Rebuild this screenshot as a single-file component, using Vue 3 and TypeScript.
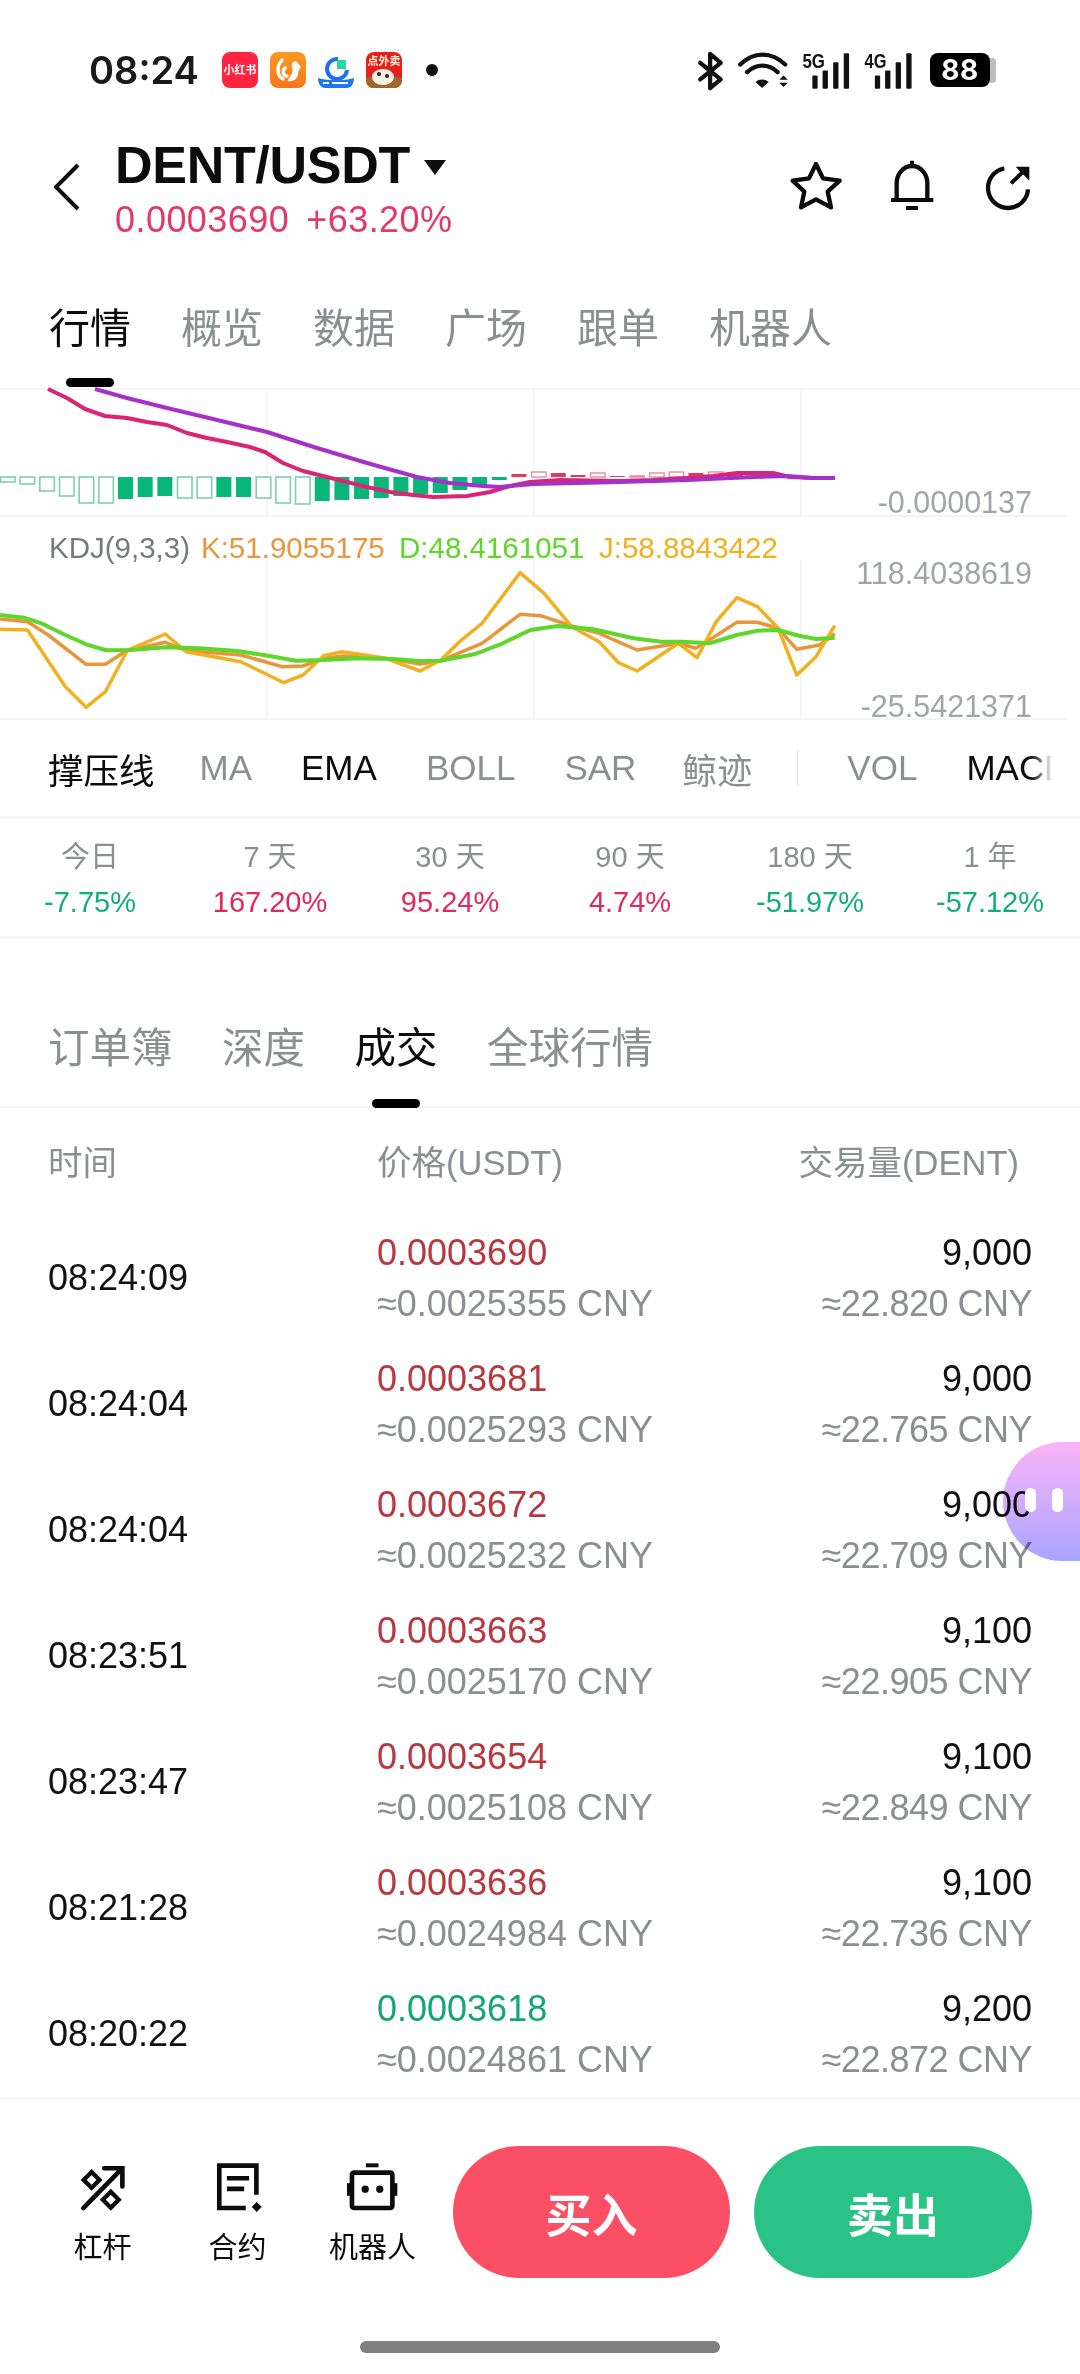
<script setup lang="ts">
interface Trade {
  time: string;
  price: string;
  up: boolean;
  cny: string;
  amount: string;
  amountCny: string;
}

const tabs = ["行情", "概览", "数据", "广场", "跟单", "机器人"];
const bookTabs = ["订单簿", "深度", "成交", "全球行情"];
const indicators = [
  { label: "MA", on: false },
  { label: "EMA", on: true },
  { label: "BOLL", on: false },
  { label: "SAR", on: false },
  { label: "鲸迹", on: false },
];
const periods = [
  { label: "今日", value: "-7.75%", up: false },
  { label: "7 天", value: "167.20%", up: true },
  { label: "30 天", value: "95.24%", up: true },
  { label: "90 天", value: "4.74%", up: true },
  { label: "180 天", value: "-51.97%", up: false },
  { label: "1 年", value: "-57.12%", up: false },
];
const trades: Trade[] = [
  { time: "08:24:09", price: "0.0003690", up: true, cny: "≈0.0025355 CNY", amount: "9,000", amountCny: "≈22.820 CNY" },
  { time: "08:24:04", price: "0.0003681", up: true, cny: "≈0.0025293 CNY", amount: "9,000", amountCny: "≈22.765 CNY" },
  { time: "08:24:04", price: "0.0003672", up: true, cny: "≈0.0025232 CNY", amount: "9,000", amountCny: "≈22.709 CNY" },
  { time: "08:23:51", price: "0.0003663", up: true, cny: "≈0.0025170 CNY", amount: "9,100", amountCny: "≈22.905 CNY" },
  { time: "08:23:47", price: "0.0003654", up: true, cny: "≈0.0025108 CNY", amount: "9,100", amountCny: "≈22.849 CNY" },
  { time: "08:21:28", price: "0.0003636", up: true, cny: "≈0.0024984 CNY", amount: "9,100", amountCny: "≈22.736 CNY" },
  { time: "08:20:22", price: "0.0003618", up: false, cny: "≈0.0024861 CNY", amount: "9,200", amountCny: "≈22.872 CNY" },
];

// histogram: height in px, hollow or not; negative bars hang below the zero line
const histDown: [number, boolean][] = [
  [5, true], [7, true], [14, true], [19, true], [26, true], [26, true], [22, false], [20, false], [19, false],
  [21, true], [21, true], [20, false], [20, false], [21, true], [26, true], [27, true], [24, false], [23, false],
  [22, false], [21, false], [19, false], [17, false], [16, false], [13, false], [9, false], [3, false],
];
const histUp: [number, boolean][] = [
  [3, false], [5, true], [4, false], [2, false], [4, true], [1, false], [1, true], [4, true], [5, true],
  [4, false], [5, true], [5, false], [3, true], [2, true],
];
const zeroY = 477;
const barStep = 19.67;
const downBars = histDown.map(([h, hollow], i) => ({ x: i * barStep + 0.5, y: zeroY, h, hollow }));
const upBars = histUp.map(([h, hollow], i) => ({ x: (i + histDown.length) * barStep + 0.5, y: zeroY - h, h, hollow }));

const pts = (list: number[][]) => list.map((p) => p.join(",")).join(" ");
// KDJ values were read off a crop that is 1.452x wide and 3x tall
const kdj = (list: number[][]) => pts(list.map(([x, y]) => [+(x / 1.452).toFixed(1), +(y / 3 + 380).toFixed(1)]));

const dif = pts([
  [48, 389], [67, 398], [85, 409], [105, 416], [127, 418], [147, 422], [167, 425], [187, 433], [207, 438], [227, 442],
  [250, 447], [265, 452], [283, 463], [303, 471], [323, 476], [343, 481], [367, 487], [390, 492], [413, 495], [433, 497],
  [467, 496], [490, 492], [500, 489], [510, 486], [530, 482], [560, 480], [620, 481], [653, 480], [687, 478], [713, 476],
  [737, 473], [773, 473], [790, 477], [813, 478], [835, 478],
]);
const dea = pts([
  [95, 389], [127, 398], [167, 408], [213, 419], [267, 432], [317, 448], [367, 463], [417, 477], [450, 483], [483, 486],
  [500, 487], [510, 486], [533, 484], [620, 482], [687, 480], [753, 477], [787, 476], [813, 478], [835, 478],
]);
const lineD = kdj([
  [0, 705], [35, 713], [60, 730], [95, 765], [125, 793], [153, 810], [185, 811], [240, 802], [290, 805], [345, 813],
  [385, 826], [430, 842], [470, 840], [520, 835], [570, 837], [610, 843], [640, 842], [690, 822], [730, 790], [770, 750],
  [810, 738], [860, 747], [920, 775], [960, 785], [990, 785], [1030, 790], [1070, 765], [1100, 752], [1130, 750],
  [1160, 767], [1185, 777], [1212, 773],
]);
const lineK = kdj([
  [0, 717], [40, 725], [70, 765], [125, 853], [153, 853], [185, 811], [240, 787], [270, 812], [350, 825], [410, 860],
  [440, 858], [470, 835], [500, 828], [560, 835], [610, 852], [640, 842], [700, 790], [755, 703], [785, 707], [830, 738],
  [870, 760], [925, 810], [985, 790], [1010, 805], [1030, 780], [1070, 727], [1100, 727], [1130, 745], [1157, 808],
  [1190, 795], [1212, 762],
]);
const lineJ = kdj([
  [0, 748], [40, 750], [95, 920], [125, 982], [153, 935], [185, 811], [240, 762], [270, 815], [350, 845], [412, 908],
  [440, 885], [470, 827], [497, 815], [560, 835], [610, 873], [640, 840], [670, 780], [700, 730], [755, 578], [790, 640],
  [830, 740], [870, 785], [898, 848], [925, 873], [985, 790], [1012, 833], [1040, 725], [1070, 653], [1100, 680],
  [1130, 745], [1157, 885], [1185, 830], [1212, 737],
]);
const signalBars = [
  { x: 0, y: 80, h: 40 }, { x: 31, y: 65, h: 55 }, { x: 63, y: 40, h: 80 }, { x: 95, y: 13, h: 107 },
];
</script>

<template>
  <div class="phone">
    <div class="status">
      <span class="status__time">08:24</span>
      <div class="status__apps">
        <svg class="app" viewBox="0 0 36 36">
          <rect width="36" height="36" rx="8" fill="#ff2442" />
          <text x="18" y="22" text-anchor="middle" class="app__txt" font-size="11" fill="#fff">小红书</text>
        </svg>
        <svg class="app" viewBox="0 0 36 36">
          <defs>
            <linearGradient id="orange" x1="0" y1="0" x2="0" y2="1">
              <stop offset="0" stop-color="#fb9a22" />
              <stop offset="1" stop-color="#f6761c" />
            </linearGradient>
          </defs>
          <rect width="36" height="36" rx="8" fill="url(#orange)" />
          <path d="M12 8C6 15 7 24 13 27M15 16c-3 3-2 8 2 8" fill="none" stroke="#fff" stroke-width="3.4" stroke-linecap="round" />
          <path d="M17 29c7 1 12-3 11-9l3-5-5-6c-3 0-5 3-4 6 2 4-1 9-5 14z" fill="#fff" />
        </svg>
        <svg class="app" viewBox="0 0 36 36">
          <path d="M20 7a10 10 0 1 0 9 11" fill="none" stroke="#1f6ff0" stroke-width="4" />
          <rect x="19" y="8" width="9" height="9" fill="#2ad6a0" />
          <path d="M0 26c10 3 26 3 36 0 0 6-3 10-7 10H7c-4 0-7-4-7-10z" fill="#1d78ee" />
          <path d="M5 31h6M14 31h16" stroke="#fff" stroke-width="2" />
        </svg>
        <svg class="app" viewBox="0 0 36 36">
          <rect width="36" height="36" rx="8" fill="#e51f1f" />
          <path d="M0 26c8-3 26-3 36 0v2c0 5-3 8-8 8H8c-5 0-8-3-8-8z" fill="#a0682e" />
          <ellipse cx="17" cy="25" rx="11" ry="8" fill="#f6efe6" />
          <circle cx="13" cy="22" r="2" fill="#3a2418" />
          <circle cx="21" cy="24" r="2" fill="#3a2418" />
          <text x="18" y="13" text-anchor="middle" class="app__txt" font-size="11" fill="#fff3d0">点外卖</text>
        </svg>
      </div>
      <span class="status__dot"></span>
      <svg class="status__icons" viewBox="75 50 705 130">
        <path d="M88 92 150 142 118 168V65l32 27-62 50" fill="none" stroke="#111" stroke-width="13" stroke-linejoin="round" stroke-linecap="round" />
        <path d="M209 97c40-40 95-40 136 0M230 120c28-26 64-26 92 0" fill="none" stroke="#111" stroke-width="13" stroke-linecap="round" />
        <path d="M255 150c11-10 29-10 40 0l-20 18z" fill="#111" />
        <path d="M327 143h26l-13-13zM327 152h26l-13 13z" fill="#111" />
        <text x="397" y="108" class="status__net" font-size="62" textLength="68" lengthAdjust="spacingAndGlyphs">5G</text>
        <text x="585" y="108" class="status__net" font-size="62" textLength="66" lengthAdjust="spacingAndGlyphs">4G</text>
        <g transform="translate(427 50)">
          <rect v-for="b in signalBars" :key="b.x" :x="b.x" :y="b.y" width="16" :height="b.h" rx="3" fill="#111" />
        </g>
        <g transform="translate(616 50)">
          <rect v-for="b in signalBars" :key="b.x" :x="b.x" :y="b.y" width="16" :height="b.h" rx="3" fill="#111" />
        </g>
      </svg>
      <div class="status__battery"><span>88</span></div>
      <span class="status__nub"></span>
    </div>

    <header class="head">
      <svg class="head__back" viewBox="0 0 26 48">
        <path d="M24 2 2 24l22 22" fill="none" stroke="#111" stroke-width="4" />
      </svg>
      <div class="head__pair">
        <div class="head__title">DENT/USDT<i class="head__caret"></i></div>
        <div class="head__price"><span>0.0003690</span><span>+63.20%</span></div>
      </div>
      <div class="head__actions">
        <svg viewBox="17 15 180 180" class="head__icon">
          <path d="M107 42l21 43 50 7-36 33 10 47-45-24-45 24 10-47-35-33 49-7z" fill="none" stroke="#0c0c0c" stroke-width="13" stroke-linejoin="round" />
        </svg>
        <svg viewBox="306 15 180 180" class="head__icon">
          <path d="M350 150v-50a46 52 0 0 1 92 0v50" fill="none" stroke="#0c0c0c" stroke-width="13" />
          <path d="M333 150h127M396 32v18" fill="none" stroke="#0c0c0c" stroke-width="12" />
          <rect x="378" y="168" width="36" height="12" fill="#0c0c0c" />
        </svg>
        <svg viewBox="593 15 180 180" class="head__icon">
          <path d="M672 55a60 60 0 1 0 71 63" fill="none" stroke="#0c0c0c" stroke-width="13" />
          <path d="M692 100l40-38" fill="none" stroke="#0c0c0c" stroke-width="12" />
          <path d="M706 50h41v42l-13-13-16-16z" fill="#0c0c0c" />
        </svg>
      </div>
    </header>

    <nav class="tabs tabs--main">
      <span v-for="(t, i) in tabs" :key="t" class="tabs__item" :class="{ 'tabs__item--on': i === 0 }">{{ t }}</span>
    </nav>

    <svg class="chart" viewBox="0 388 1080 332">
      <path d="M0 389H1080M0 516H1067M0 719H1067M267 389V516M534 389V516M801 389V516M267 560V719M534 560V719M801 560V719" fill="none" stroke="#f3f4f5" stroke-width="2" />
      <template v-for="(b, i) in downBars" :key="'d' + i">
        <rect v-if="b.hollow" :x="b.x" :y="b.y" width="14.5" :height="b.h" fill="#fff" stroke="#7ccfb4" stroke-width="1.6" />
        <rect v-else :x="b.x - 0.5" :y="b.y" width="15" :height="b.h" fill="#08b679" />
      </template>
      <template v-for="(b, i) in upBars" :key="'u' + i">
        <rect v-if="b.hollow" :x="b.x" :y="b.y" width="14.5" :height="b.h" fill="#fff" stroke="#e88a9e" stroke-width="1.4" />
        <rect v-else :x="b.x - 0.5" :y="b.y" width="15" :height="b.h" fill="#dc3d5c" />
      </template>
      <polyline :points="dif" fill="none" stroke="#dc2474" stroke-width="4" stroke-linejoin="round" />
      <polyline :points="dea" fill="none" stroke="#a431c8" stroke-width="4" stroke-linejoin="round" />
      <text x="1032" y="513" text-anchor="end" class="chart__axis">-0.0000137</text>
      <text x="49" y="558" class="chart__legend" fill="#777a7d">KDJ(9,3,3)</text>
      <text x="201" y="558" class="chart__legend" fill="#e8963c">K:51.9055175</text>
      <text x="399" y="558" class="chart__legend" fill="#5ed62c">D:48.4161051</text>
      <text x="599" y="558" class="chart__legend" fill="#f0b020">J:58.8843422</text>
      <text x="1032" y="584" text-anchor="end" class="chart__axis">118.4038619</text>
      <text x="1032" y="717" text-anchor="end" class="chart__axis">-25.5421371</text>
      <polyline :points="lineK" fill="none" stroke="#e8963c" stroke-width="3.5" stroke-linejoin="round" />
      <polyline :points="lineJ" fill="none" stroke="#f0b020" stroke-width="3.5" stroke-linejoin="round" />
      <polyline :points="lineD" fill="none" stroke="#5ed62c" stroke-width="4" stroke-linejoin="round" />
    </svg>

    <div class="ind">
      <span class="ind__sr">撑压线</span>
      <span v-for="m in indicators" :key="m.label" class="ind__item" :class="{ 'ind__item--on': m.on }">{{ m.label }}</span>
      <i class="ind__sep"></i>
      <span class="ind__item">VOL</span>
      <span class="ind__item ind__item--on">MACD</span>
      <i class="ind__fade"></i>
    </div>

    <div class="periods">
      <div v-for="p in periods" :key="p.label" class="periods__col">
        <span class="periods__label">{{ p.label }}</span>
        <span :class="p.up ? 'periods__up' : 'periods__down'">{{ p.value }}</span>
      </div>
    </div>

    <nav class="tabs tabs--book">
      <span v-for="(t, i) in bookTabs" :key="t" class="tabs__item" :class="{ 'tabs__item--on': i === 2 }">{{ t }}</span>
    </nav>

    <div class="thead">
      <span>时间</span>
      <span>价格(USDT)</span>
      <span class="thead__amount">交易量(DENT)</span>
    </div>

    <div class="trades">
      <div v-for="(t, i) in trades" :key="i" class="trade">
        <span class="trade__time">{{ t.time }}</span>
        <div class="trade__col">
          <span :class="t.up ? 'trade__red' : 'trade__green'">{{ t.price }}</span>
          <span class="trade__grey">{{ t.cny }}</span>
        </div>
        <div class="trade__col trade__col--right">
          <span class="trade__time">{{ t.amount }}</span>
          <span class="trade__grey trade__grey--tight">{{ t.amountCny }}</span>
        </div>
      </div>
    </div>

    <div class="bottom">
      <div class="bottom__tool">
        <svg viewBox="45 30 160 160" class="bottom__icon">
          <path d="M67 175 180 60M130 55h55v55" fill="none" stroke="#0c0c0c" stroke-width="14" stroke-linecap="round" />
          <path d="M92 66l24 24-24 24-24-24zM150 126l24 24-24 24-24-24z" fill="none" stroke="#0c0c0c" stroke-width="13" />
        </svg>
        <span>杠杆</span>
      </div>
      <div class="bottom__tool">
        <svg viewBox="450 30 160 160" class="bottom__icon">
          <path d="M555 175h-80V47h112v88" fill="none" stroke="#0c0c0c" stroke-width="14" />
          <path d="M498 85h67M498 117h52" fill="none" stroke="#0c0c0c" stroke-width="14" />
          <path d="M588 157l15 15-15 15-15-15z" fill="#0c0c0c" />
        </svg>
        <span>合约</span>
      </div>
      <div class="bottom__tool">
        <svg viewBox="860 30 160 160" class="bottom__icon">
          <rect x="878" y="68" width="122" height="107" rx="6" fill="none" stroke="#0c0c0c" stroke-width="14" />
          <rect x="920" y="40" width="38" height="12" fill="#0c0c0c" />
          <rect x="863" y="100" width="11" height="38" fill="#0c0c0c" />
          <rect x="1004" y="100" width="11" height="38" fill="#0c0c0c" />
          <circle cx="918" cy="118" r="11" fill="#0c0c0c" />
          <circle cx="962" cy="118" r="11" fill="#0c0c0c" />
        </svg>
        <span>机器人</span>
      </div>
      <button class="bottom__btn bottom__btn--buy">买入</button>
      <button class="bottom__btn bottom__btn--sell">卖出</button>
    </div>

    <div class="homebar"></div>

    <div class="bubble"><i></i><i></i></div>
  </div>
</template>

<style scoped>
.phone {
  position: relative;
  width: 1080px;
  height: 2374px;
  overflow: hidden;
  background: #fff;
  color: #0c0c0c;
  font-family: "Liberation Sans", "Noto Sans CJK SC", sans-serif;
}

.status {
  display: flex;
  align-items: center;
  height: 80px;
  padding: 30px 0 0 89px;
}
.status__time {
  width: 133px;
  font-family: Inter, sans-serif;
  font-size: 38px;
  font-weight: 600;
  color: #1a1a1a;
}
.status__apps {
  display: flex;
  gap: 12px;
}
.app {
  width: 36px;
  height: 36px;
  display: block;
}
.app__txt {
  font-family: "Noto Sans CJK SC", sans-serif;
  font-weight: 700;
}
.status__dot {
  width: 12px;
  height: 12px;
  margin-left: 24px;
  border-radius: 50%;
  background: #111;
}
.status__icons {
  width: 235px;
  height: 43px;
  margin-left: 257px;
}
.status__net {
  font-family: "Liberation Sans", sans-serif;
  font-weight: 700;
  fill: #111;
}
.status__battery {
  display: flex;
  align-items: center;
  justify-content: center;
  width: 60px;
  height: 34px;
  border-radius: 8px;
  background: #000;
  color: #fff;
  font-family: Inter, sans-serif;
  font-size: 28px;
  font-weight: 700;
  letter-spacing: 0.5px;
}
.status__nub {
  width: 6px;
  height: 25px;
  border-radius: 0 4px 4px 0;
  background: #bdbdbd;
}

.head {
  display: flex;
  align-items: flex-start;
  height: 160px;
  padding-left: 54px;
}
.head__back {
  width: 26px;
  height: 48px;
  margin-top: 53px;
}
.head__pair {
  margin: 25px 0 0 35px;
}
.head__title {
  display: flex;
  align-items: flex-start;
  height: 60px;
  font-size: 52px;
  line-height: 60px;
  font-weight: 700;
  letter-spacing: -0.3px;
}
.head__caret {
  width: 0;
  height: 0;
  margin: 25px 0 0 14px;
  border-left: 11px solid transparent;
  border-right: 11px solid transparent;
  border-top: 15px solid #0c0c0c;
}
.head__price {
  display: flex;
  gap: 17px;
  margin-top: 5px;
  font-size: 36px;
  line-height: 40px;
  letter-spacing: 0.45px;
  color: #e23a68;
}
.head__actions {
  display: flex;
  gap: 36px;
  margin: 45px 0 0 auto;
  padding-right: 42px;
}
.head__icon {
  width: 60px;
  height: 60px;
}

.tabs {
  display: flex;
  gap: 50px;
  padding-left: 49px;
  font-size: 41px;
  line-height: 48px;
  color: #8c8f92;
}
.tabs--main {
  height: 118px;
  padding-top: 35px;
  box-sizing: border-box;
}
.tabs--book {
  gap: 49.5px;
  height: 169px;
  padding: 86px 0 0 48px;
  box-sizing: border-box;
  border-bottom: 2px solid #f3f4f5;
  font-size: 41.5px;
}
.tabs__item {
  position: relative;
  height: 48px;
}
.tabs__item--on {
  color: #0c0c0c;
}
.tabs__item--on::after {
  content: "";
  position: absolute;
  left: 50%;
  width: 48px;
  height: 9px;
  margin-left: -24px;
  border-radius: 5px;
  background: #000;
}
.tabs--main .tabs__item--on::after {
  top: 73px;
}
.tabs--book .tabs__item--on::after {
  top: 74px;
}

.chart {
  display: block;
  width: 1080px;
  height: 332px;
  overflow: visible;
}
.chart__axis {
  font-size: 30.5px;
  fill: #a2a5a8;
}
.chart__legend {
  font-size: 29.5px;
}

.ind {
  position: relative;
  display: flex;
  align-items: center;
  gap: 49px;
  width: 1053px;
  height: 96px;
  padding-left: 48px;
  box-sizing: border-box;
  overflow: hidden;
  font-size: 35px;
  color: #8c8f92;
  white-space: nowrap;
}
.ind__sr {
  margin-right: -4px;
  font-size: 35.5px;
  color: #0c0c0c;
}
.ind__item:nth-child(6) {
  margin-left: -3px;
}
.ind__item--on {
  color: #0c0c0c;
}
.ind__sep {
  flex: none;
  width: 1px;
  height: 36px;
  margin-left: -4px;
  background: #e8e9ea;
}
.ind__fade {
  position: absolute;
  top: 0;
  right: 0;
  width: 22px;
  height: 100%;
  background: linear-gradient(to right, rgba(255, 255, 255, 0), #fff);
}

.periods {
  display: grid;
  grid-template-columns: repeat(6, 1fr);
  height: 123px;
  box-sizing: border-box;
  border-top: 3px solid #f4f5f6;
  border-bottom: 3px solid #f4f5f6;
}
.periods__col {
  display: flex;
  flex-direction: column;
  align-items: center;
  padding-top: 18px;
  font-size: 29px;
  line-height: 40px;
}
.periods__label {
  margin-bottom: 5px;
  color: #8c8f92;
}
.periods__up {
  color: #e0285e;
}
.periods__down {
  color: #12ad7e;
}

.thead {
  display: grid;
  grid-template-columns: 329px 1fr auto;
  align-items: center;
  height: 107px;
  padding: 0 61px 3px 48px;
  box-sizing: border-box;
  font-size: 34.5px;
  color: #8c8f92;
}

.trades {
  display: flex;
  flex-direction: column;
}
.trade {
  display: grid;
  grid-template-columns: 329px 1fr auto;
  align-items: center;
  height: 126px;
  padding: 0 48px;
  font-size: 36px;
}
.trade__col {
  display: flex;
  flex-direction: column;
  line-height: 51px;
}
.trade__col--right {
  align-items: flex-end;
}
.trade__time {
  color: #111;
}
.trade__red {
  color: #b7393f;
}
.trade__green {
  color: #12a678;
}
.trade__grey {
  color: #8c8f92;
}
.trade__grey--tight {
  letter-spacing: -0.5px;
}

.bottom {
  display: flex;
  align-items: flex-start;
  height: 244px;
  padding: 46px 0 0 35px;
  box-sizing: border-box;
  border-top: 3px solid #f4f5f6;
}
.bottom__tool {
  display: flex;
  flex-direction: column;
  align-items: center;
  width: 135px;
  padding-top: 14px;
  font-size: 29px;
  line-height: 36px;
}
.bottom__icon {
  width: 53px;
  height: 53px;
  margin-bottom: 17px;
}
.bottom__btn {
  width: 277px;
  height: 132px;
  padding: 0;
  border: 0;
  border-radius: 66px;
  color: #fff;
  font-family: inherit;
  font-size: 46px;
  font-weight: 700;
}
.bottom__btn--buy {
  margin-left: 13px;
  background: #fa4f64;
}
.bottom__btn--sell {
  width: 278px;
  margin-left: 24px;
  background: #2bc287;
}

.homebar {
  width: 360px;
  height: 12px;
  margin: 0 auto;
  border-radius: 6px;
  background: #808080;
}

.bubble {
  position: absolute;
  top: 1442px;
  right: 0;
  display: flex;
  align-items: center;
  gap: 16px;
  width: 77px;
  height: 119px;
  padding: 0 0 4px 22px;
  box-sizing: border-box;
}
.bubble::before {
  content: "";
  position: absolute;
  inset: 0;
  border-radius: 60px 0 0 60px;
  background: linear-gradient(#fab4f6, #a8a5ff);
  mix-blend-mode: multiply;
}
.bubble i {
  position: relative;
  width: 11px;
  height: 24px;
  border-radius: 6px;
  background: #fff;
}
</style>
